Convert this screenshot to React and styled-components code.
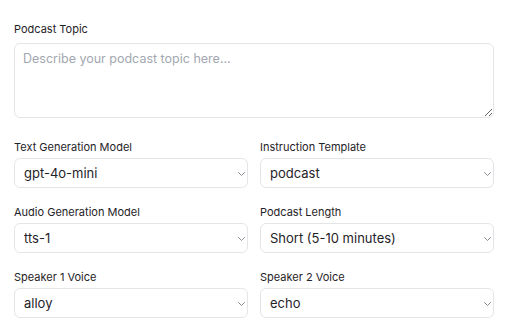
import styled, { createGlobalStyle } from 'styled-components';

const GlobalStyle = createGlobalStyle`
  body {
    margin: 0;
    background: #ffffff;
    font-family: Inter, "Noto Sans", "Liberation Sans", sans-serif;
    color: #1f2328;
  }
`;

const Form = styled.form`
  width: 480px;
  box-sizing: border-box;
  margin: 0 0 0 14px;
  padding-top: 22px;
`;

const TopicField = styled.div`
  display: flex;
  flex-direction: column;
  margin-bottom: 22px;
`;

const Grid = styled.div`
  display: grid;
  grid-template-columns: 1fr 1fr;
  column-gap: 12px;
  row-gap: 17px;
`;

const Field = styled.div`
  display: flex;
  flex-direction: column;
  min-width: 0;
`;

const Label = styled.label`
  display: block;
  font-size: 11px;
  line-height: 14px;
  color: #1f2328;
  margin-bottom: ${({ $gap }) => $gap}px;
`;

const TextArea = styled.textarea`
  display: block;
  width: 100%;
  height: 75px;
  box-sizing: border-box;
  border: 1px solid #e3e5e8;
  border-radius: 6px;
  padding: 7px 8px;
  font-family: inherit;
  font-size: 12.5px;
  line-height: 16px;
  color: #1f2328;
  resize: vertical;
  outline: none;

  &::placeholder {
    color: #a3a8b0;
  }
`;

const SelectWrap = styled.div`
  position: relative;
`;

const Select = styled.select`
  display: block;
  width: 100%;
  height: 30px;
  box-sizing: border-box;
  appearance: none;
  -webkit-appearance: none;
  background: #ffffff;
  border: 1px solid #e3e5e8;
  border-radius: 6px;
  padding: 0 18px 0 9px;
  font-family: inherit;
  font-size: 13px;
  color: #1f2328;
  outline: none;
`;

const Chevron = styled.svg`
  position: absolute;
  right: 3px;
  top: 50%;
  width: 7px;
  height: 4px;
  margin-top: -1px;
  pointer-events: none;
  color: #7a7f87;
`;

const fields = [
  { id: 'textModel', label: 'Text Generation Model', options: ['gpt-4o-mini', 'gpt-4o'] },
  { id: 'template', label: 'Instruction Template', options: ['podcast', 'lecture', 'interview'] },
  { id: 'audioModel', label: 'Audio Generation Model', options: ['tts-1', 'tts-1-hd'] },
  { id: 'length', label: 'Podcast Length', options: ['Short (5-10 minutes)', 'Long (20-30 minutes)'] },
  { id: 'voice1', label: 'Speaker 1 Voice', options: ['alloy', 'echo', 'fable', 'onyx', 'nova', 'shimmer'] },
  { id: 'voice2', label: 'Speaker 2 Voice', options: ['echo', 'alloy', 'fable', 'onyx', 'nova', 'shimmer'] },
];

export default function App() {
  return (
    <>
      <GlobalStyle />
      <Form onSubmit={(e) => e.preventDefault()}>
        <TopicField>
          <Label htmlFor="topic" $gap={7}>Podcast Topic</Label>
          <TextArea id="topic" placeholder="Describe your podcast topic here..." />
        </TopicField>
        <Grid>
          {fields.map((f) => (
            <Field key={f.id}>
              <Label htmlFor={f.id} $gap={4}>{f.label}</Label>
              <SelectWrap>
                <Select id={f.id} defaultValue={f.options[0]}>
                  {f.options.map((o) => (
                    <option key={o} value={o}>{o}</option>
                  ))}
                </Select>
                <Chevron viewBox="0 0 7 4" fill="none">
                  <polyline points="0.5,0.5 3.5,3.5 6.5,0.5" stroke="currentColor" strokeWidth="0.9" strokeLinecap="round" strokeLinejoin="round" />
                </Chevron>
              </SelectWrap>
            </Field>
          ))}
        </Grid>
      </Form>
    </>
  );
}
